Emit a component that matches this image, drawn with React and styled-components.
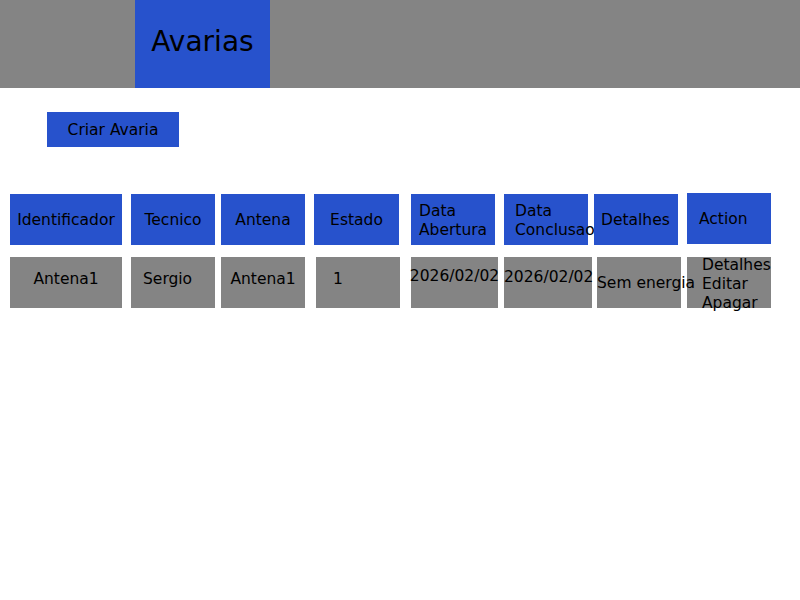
import styled, { createGlobalStyle } from "styled-components";

const GlobalStyle = createGlobalStyle`
	body {
		margin: 0;
		min-height: 100vh;
		background: #ffffff;
		font-family: "DejaVu Sans", "Liberation Sans", sans-serif;
		color: #000000;
	}
`;

const BLUE = "#2752cc";
const GREY = "#848484";

const TopBar = styled.header`
	display: flex;
	height: 88px;
	padding-left: 135px;
	background: ${GREY};
`;

const TitleBox = styled.div`
	display: flex;
	align-items: center;
	justify-content: center;
	width: 135px;
	background: ${BLUE};
`;

const Title = styled.h1`
	margin: 0 0 6px;
	font-size: 28px;
	font-weight: normal;
`;

const Main = styled.main`
	display: flex;
	flex-direction: column;
	align-items: flex-start;
	padding-top: 24px;
	padding-bottom: 40px;
`;

const CreateButton = styled.button`
	margin-left: 47px;
	width: 132px;
	height: 35px;
	padding: 0;
	border: none;
	background: ${BLUE};
	font-family: inherit;
	font-size: 15.5px;
	color: #000;
	cursor: pointer;
`;

const Row = styled.div`
	display: flex;
	align-items: flex-start;
	margin-top: ${(p) => p.$top}px;
	font-size: 15.5px;
	line-height: 19px;
	white-space: nowrap;
`;

const HeadCell = styled.div`
	display: flex;
	align-items: center;
	justify-content: ${(p) => (p.$center ? "center" : "flex-start")};
	box-sizing: border-box;
	width: ${(p) => p.$w}px;
	height: 51px;
	margin-left: ${(p) => p.$ml}px;
	margin-top: ${(p) => p.$mt || 0}px;
	padding-top: 2px;
	padding-left: ${(p) => p.$pl || 0}px;
	background: ${BLUE};
`;

const DataCell = styled.div`
	display: flex;
	justify-content: ${(p) => (p.$center ? "center" : "flex-start")};
	box-sizing: border-box;
	width: ${(p) => p.$w}px;
	height: 51px;
	margin-left: ${(p) => p.$ml}px;
	padding-left: ${(p) => p.$pl || 0}px;
	background: ${GREY};
`;

/* overflowing text stays visible above the neighbouring cells */
const CellText = styled.div`
	position: relative;
	margin-top: ${(p) => p.$pt}px;
`;

const headers = [
	{ x: 10, w: 112, text: ["Identificador"], center: true },
	{ x: 131, w: 84, text: ["Tecnico"], center: true },
	{ x: 221, w: 84, text: ["Antena"], center: true },
	{ x: 314, w: 85, text: ["Estado"], center: true },
	{ x: 411, w: 84, text: ["Data", "Abertura"], pl: 8 },
	{ x: 504, w: 84, text: ["Data", "Conclusao"], pl: 11 },
	{ x: 594, w: 84, text: ["Detalhes"], pl: 7 },
	{ x: 687, w: 84, text: ["Action"], pl: 12, mt: -1 },
];

const cells = [
	{ x: 10, w: 112, text: ["Antena1"], center: true, pt: 13 },
	{ x: 131, w: 84, text: ["Sergio"], pl: 12, pt: 13 },
	{ x: 221, w: 84, text: ["Antena1"], center: true, pt: 13 },
	{ x: 316, w: 84, text: ["1"], pl: 17, pt: 13 },
	{ x: 411, w: 87, text: ["2026/02/02"], center: true, pt: 10 },
	{ x: 504, w: 88, text: ["2026/02/02"], pt: 11 },
	{ x: 597, w: 84, text: ["Sem energia"], pt: 17 },
	{ x: 687, w: 84, text: ["Detalhes", "Editar", "Apagar"], pl: 15, pt: -1 },
];

// margin between cells comes from the x of each cell and the end of the previous one
const withGaps = (list) =>
	list.map((cell, i) => ({
		...cell,
		ml: i === 0 ? cell.x : cell.x - (list[i - 1].x + list[i - 1].w),
	}));

export default function App() {
	return (
		<>
			<GlobalStyle />
			<TopBar>
				<TitleBox>
					<Title>Avarias</Title>
				</TitleBox>
			</TopBar>
			<Main>
				<CreateButton type="button">Criar Avaria</CreateButton>

				<Row $top={47}>
					{withGaps(headers).map((h) => (
						<HeadCell
							key={h.x}
							$w={h.w}
							$ml={h.ml}
							$mt={h.mt}
							$pl={h.pl}
							$center={h.center}
						>
							<div>
								{h.text.map((line) => (
									<div key={line}>{line}</div>
								))}
							</div>
						</HeadCell>
					))}
				</Row>

				<Row $top={12}>
					{withGaps(cells).map((c) => (
						<DataCell
							key={c.x}
							$w={c.w}
							$ml={c.ml}
							$pl={c.pl}
							$center={c.center}
						>
							<CellText $pt={c.pt}>
								{c.text.map((line) => (
									<div key={line}>{line}</div>
								))}
							</CellText>
						</DataCell>
					))}
				</Row>
			</Main>
		</>
	);
}
